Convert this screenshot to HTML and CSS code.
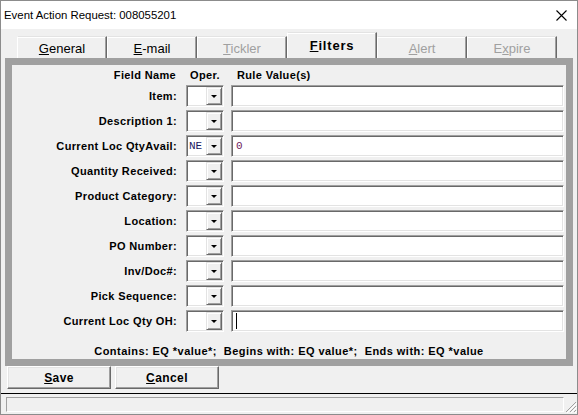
FILE: index.html
```
<!DOCTYPE html>
<html>
<head>
<meta charset="utf-8">
<link rel="stylesheet" href="styles.css">
</head>
<body>
<div class="window">
  <div class="titlebar">
    <span class="title">Event Action Request: 008055201</span>
    <svg class="close" width="11" height="11" viewBox="0 0 11 11"><path d="M0.5 0.5 L10.5 10.5 M10.5 0.5 L0.5 10.5" stroke="#000" stroke-width="1.1" fill="none"/></svg>
  </div>
  <div class="tabs">
    <div class="tab"><span><u>G</u>eneral</span></div>
    <div class="tab"><span><u>E</u>-mail</span></div>
    <div class="tab disabled"><span><u>T</u>ickler</span></div>
    <div class="tab active"><span><u>F</u>ilters</span></div>
    <div class="tab disabled"><span><u>A</u>lert</span></div>
    <div class="tab disabled"><span>E<u>x</u>pire</span></div>
  </div>
  <div class="frame">
    <div class="grid">
      <div class="hdr hdr-name">Field Name</div>
      <div class="hdr hdr-oper">Oper.</div>
      <div class="hdr hdr-rule">Rule Value(s)</div>

      <div class="label">Item:</div>
      <div class="combo"><span class="cval"></span><span class="drop"><i class="arrow"></i></span></div>
      <div class="cell"><div class="text"></div></div>

      <div class="label">Description 1:</div>
      <div class="combo"><span class="cval"></span><span class="drop"><i class="arrow"></i></span></div>
      <div class="cell"><div class="text"></div></div>

      <div class="label">Current Loc QtyAvail:</div>
      <div class="combo"><span class="cval">NE</span><span class="drop"><i class="arrow"></i></span></div>
      <div class="cell"><div class="text"><span class="tval">0</span></div></div>

      <div class="label">Quantity Received:</div>
      <div class="combo"><span class="cval"></span><span class="drop"><i class="arrow"></i></span></div>
      <div class="cell"><div class="text"></div></div>

      <div class="label">Product Category:</div>
      <div class="combo"><span class="cval"></span><span class="drop"><i class="arrow"></i></span></div>
      <div class="cell"><div class="text"></div></div>

      <div class="label">Location:</div>
      <div class="combo"><span class="cval"></span><span class="drop"><i class="arrow"></i></span></div>
      <div class="cell"><div class="text"></div></div>

      <div class="label">PO Number:</div>
      <div class="combo"><span class="cval"></span><span class="drop"><i class="arrow"></i></span></div>
      <div class="cell"><div class="text"></div></div>

      <div class="label">Inv/Doc#:</div>
      <div class="combo"><span class="cval"></span><span class="drop"><i class="arrow"></i></span></div>
      <div class="cell"><div class="text"></div></div>

      <div class="label">Pick Sequence:</div>
      <div class="combo"><span class="cval"></span><span class="drop"><i class="arrow"></i></span></div>
      <div class="cell"><div class="text"></div></div>

      <div class="label">Current Loc Qty OH:</div>
      <div class="combo"><span class="cval"></span><span class="drop"><i class="arrow"></i></span></div>
      <div class="cell"><div class="text"><span class="caret"></span></div></div>
    </div>
    <div class="hint">Contains: EQ *value*;  Begins with: EQ value*;  Ends with: EQ *value</div>
  </div>
  <div class="buttons">
    <div class="btn"><u>S</u>ave</div>
    <div class="btn"><u>C</u>ancel</div>
  </div>
  <div class="status">
    <div class="status-box"></div>
    <svg class="grip" width="12" height="12" viewBox="0 0 12 12">
      <path d="M11 1 L1 11 M11 5 L5 11 M11 9 L9 11" stroke="#a0a0a0" stroke-width="1" fill="none"/>
      <path d="M12 2 L2 12 M12 6 L6 12 M12 10 L10 12" stroke="#ffffff" stroke-width="1" fill="none"/>
    </svg>
  </div>
</div>
</body>
</html>
```
FILE: styles.css
```
* { box-sizing: border-box; }
html, body { margin: 0; padding: 0; }
body {
  width: 578px;
  height: 415px;
  overflow: hidden;
  background: #f0f0f0;
  font-family: "Liberation Sans", Arial, sans-serif;
  color: #000;
}
.window {
  width: 578px;
  height: 415px;
  border: 1px solid #8c8c8c;
  display: flex;
  flex-direction: column;
  background: #f0f0f0;
}
.titlebar {
  flex: none;
  height: 28px;
  background: #fff;
  display: flex;
  align-items: center;
  justify-content: space-between;
  padding: 0 10px 0 3px;
}
.title { font-size: 11.4px; }
.close { display: block; }

/* tabs */
.tabs {
  flex: none;
  height: 29px;
  display: flex;
  align-items: flex-end;
  padding-left: 16px;
}
.tab {
  width: 90px;
  height: 22px;
  background: #f0f0f0;
  border-top: 1px solid #e3e3e3;
  border-left: 1px solid #fff;
  border-right: 1px solid #696969;
  box-shadow: inset -1px 0 #a0a0a0, inset 0 1px #fff;
  display: flex;
  align-items: center;
  justify-content: center;
  font-size: 13px;
  padding-top: 1px;
}
.tab.disabled { color: #a0a0a0; }
.tab.active {
  height: 26px;
  font-weight: bold;
  letter-spacing: 0.8px;
  padding-top: 0;
}

/* frame */
.frame {
  flex: none;
  margin-left: 4px;
  width: 568px;
  height: 308px;
  border: 7px solid #a0a0a0;
  background: #f0f0f0;
}
.grid {
  display: grid;
  grid-template-columns: 174px 38px 340px;
  grid-template-rows: 17px;
  grid-auto-rows: 22px;
  row-gap: 3px;
}
.hdr, .label, .hint {
  font-weight: bold;
  font-size: 11px;
  letter-spacing: 0.35px;
}
.hdr { align-self: end; line-height: 13px; }
.hdr-name { text-align: right; padding-right: 10px; }
.hdr-oper { text-align: center; }
.hdr-rule { padding-left: 13px; }
.label {
  text-align: right;
  padding-right: 9px;
  align-self: center;
  line-height: 13px;
}
.combo, .text {
  background: #fff;
  border: 1px solid;
  border-color: #a0a0a0 #fff #fff #a0a0a0;
  box-shadow: inset 1px 1px #696969, inset -1px -1px #e3e3e3;
  height: 22px;
}
.combo {
  display: flex;
  padding: 1px;
}
.cval {
  flex: 1;
  font-family: "Liberation Mono", "Courier New", monospace;
  font-size: 11px;
  line-height: 18px;
  padding-left: 1px;
  color: #1a1a60;
}
.drop {
  width: 16px;
  height: 18px;
  background: #f0f0f0;
  border: 1px solid;
  border-color: #e3e3e3 #696969 #696969 #e3e3e3;
  box-shadow: inset 1px 1px #fff, inset -1px -1px #a0a0a0;
  display: flex;
  align-items: center;
  justify-content: center;
}
.arrow {
  width: 0;
  height: 0;
  border-left: 3px solid transparent;
  border-right: 3px solid transparent;
  border-top: 3px solid #000;
  margin-top: 1px;
}
.cell { padding-left: 7px; }
.text {
  display: flex;
  align-items: center;
  padding-left: 4px;
}
.tval {
  font-family: "Liberation Mono", "Courier New", monospace;
  font-size: 11px;
  color: #6e1a5a;
}
.caret {
  width: 1px;
  height: 16px;
  background: #000;
}
.hint {
  margin-top: 12px;
  line-height: 14px;
  text-align: center;
  white-space: pre;
  letter-spacing: 0.45px;
}

/* buttons */
.buttons {
  flex: none;
  height: 27px;
  display: flex;
  gap: 4px;
  padding-left: 6px;
}
.btn {
  width: 104px;
  height: 23px;
  background: #f0f0f0;
  border: 1px solid;
  border-color: #fff #696969 #696969 #fff;
  box-shadow: inset -1px -1px #a0a0a0, inset 1px 1px #e3e3e3;
  display: flex;
  align-items: center;
  justify-content: center;
  font-weight: bold;
  font-size: 12px;
  letter-spacing: 0.4px;
}

/* status */
.status {
  flex: 1;
  border-top: 1px solid #000;
  display: flex;
  align-items: flex-end;
  padding: 3px 0 1px 5px;
}
.status-box {
  width: 558px;
  height: 15px;
  align-self: flex-start;
  border: 1px solid;
  border-color: #a0a0a0 #fff #fff #a0a0a0;
}
.grip { display: block; margin-left: 1px; }
```
